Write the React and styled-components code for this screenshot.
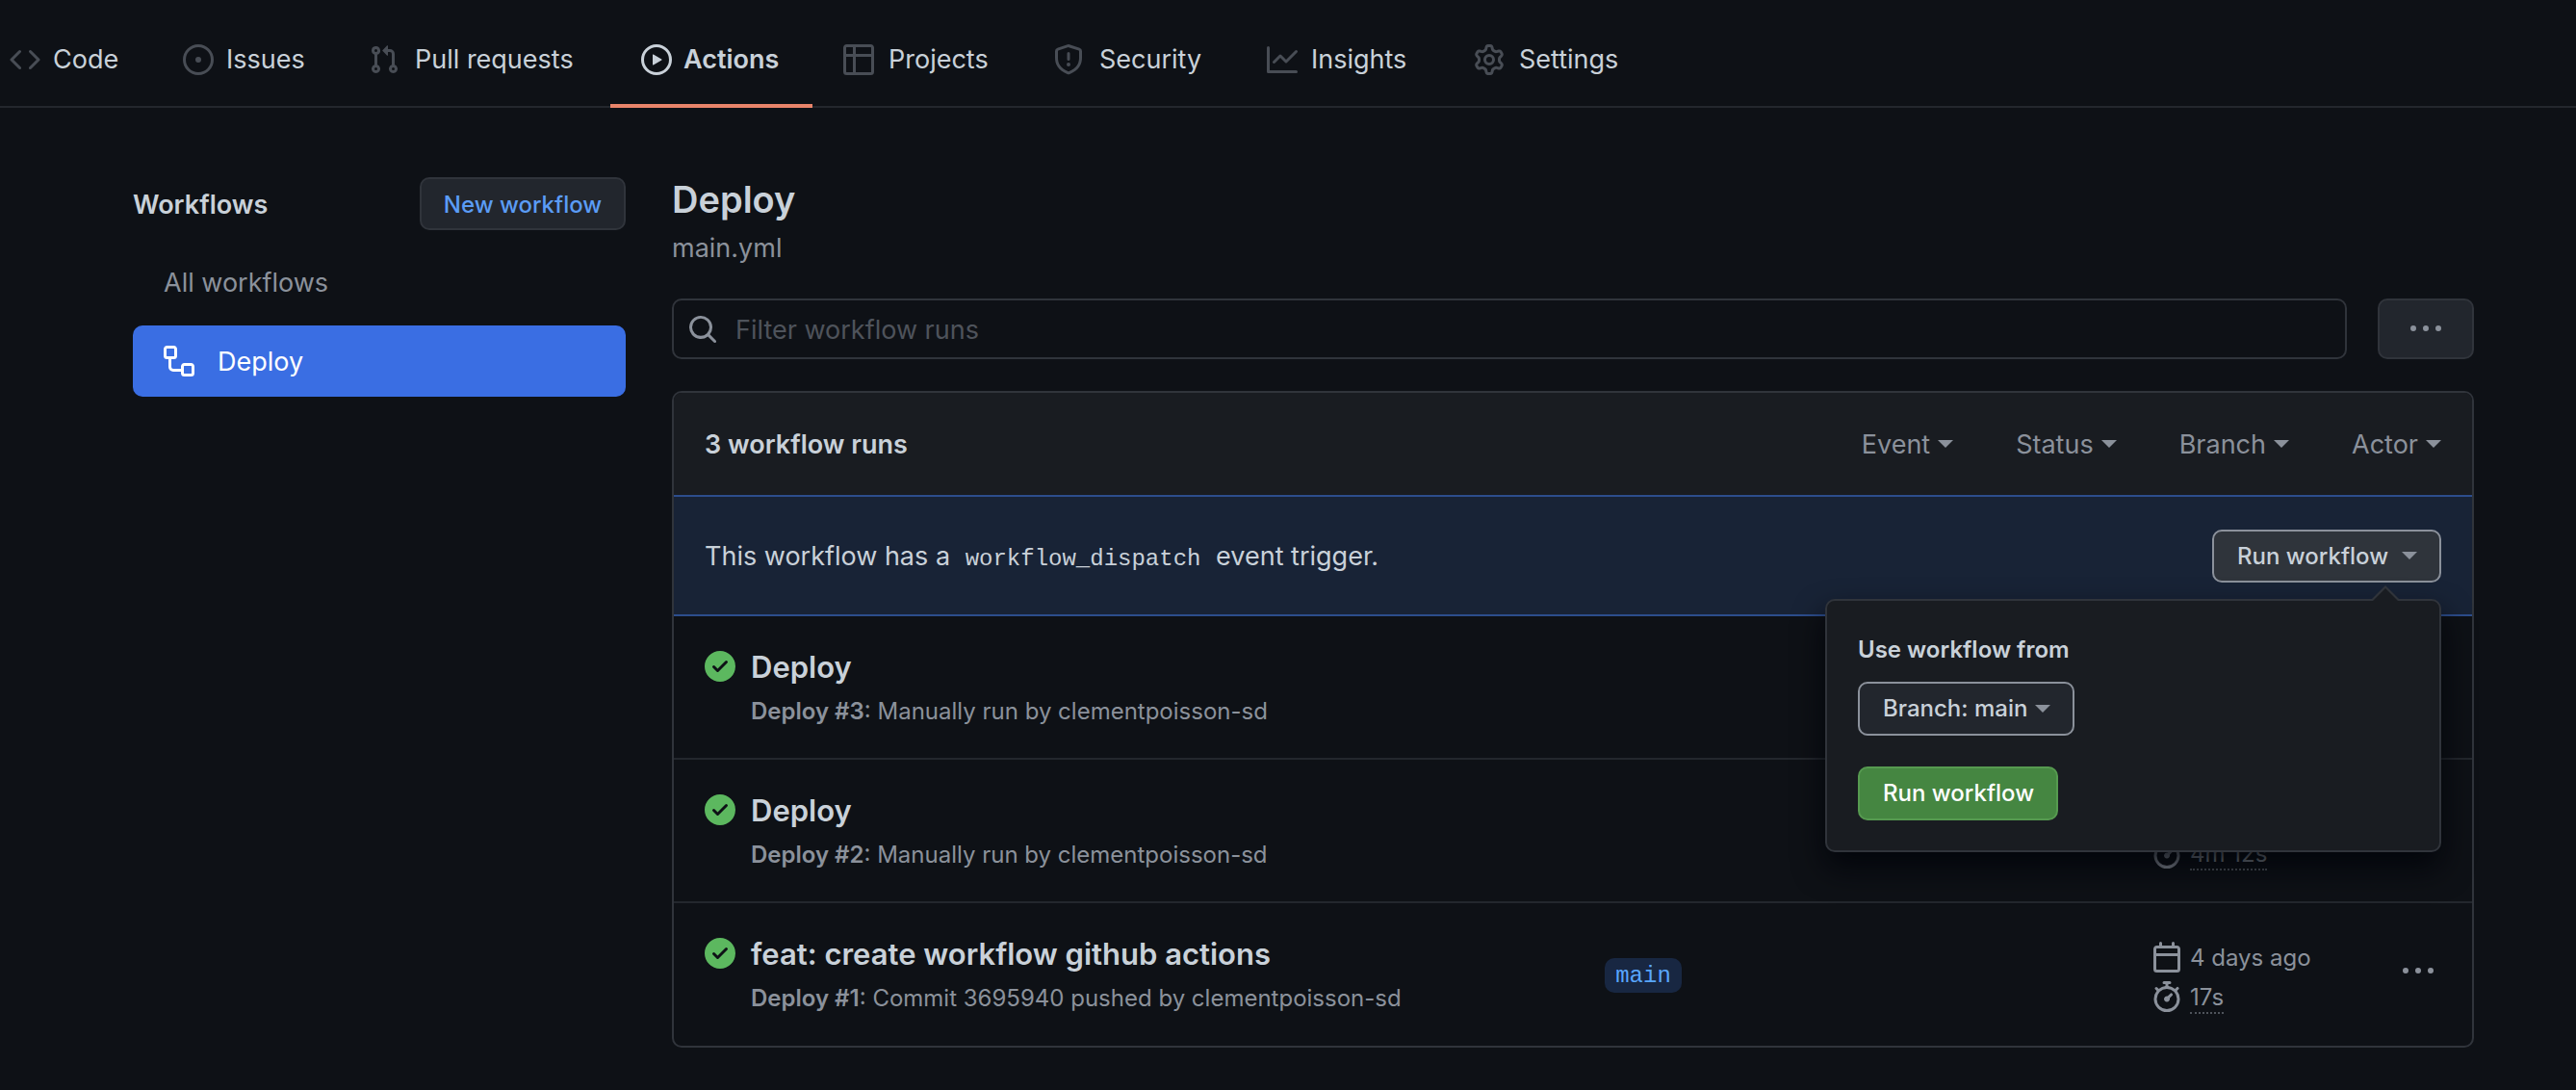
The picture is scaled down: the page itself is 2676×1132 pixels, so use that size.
import React from "react";
import styled, { createGlobalStyle } from "styled-components";

const Global = createGlobalStyle`
  html, body { margin: 0; padding: 0; background: #0e1116; }
  body { font-family: Inter, "Noto Sans", "Liberation Sans", sans-serif; color: #c9d1d9; overflow: hidden; -webkit-font-smoothing: antialiased; }
  * { box-sizing: border-box; }
`;

const P = {
  code: "m11.28 3.22 4.25 4.25a.75.75 0 0 1 0 1.06l-4.25 4.25a.749.749 0 0 1-1.275-.326.749.749 0 0 1 .215-.734L13.94 8l-3.72-3.72a.749.749 0 0 1 .326-1.275.749.749 0 0 1 .734.215Zm-6.56 0a.751.751 0 0 1 1.042.018.751.751 0 0 1 .018 1.042L2.06 8l3.72 3.72a.749.749 0 0 1-.326 1.275.749.749 0 0 1-.734-.215L.47 8.53a.75.75 0 0 1 0-1.06Z",
  issue: "M8 9.5a1.5 1.5 0 1 0 0-3 1.5 1.5 0 0 0 0 3ZM8 0a8 8 0 1 1 0 16A8 8 0 0 1 8 0ZM1.5 8a6.5 6.5 0 1 0 13 0 6.5 6.5 0 0 0-13 0Z",
  pr: "M1.5 3.25a2.25 2.25 0 1 1 3 2.122v5.256a2.251 2.251 0 1 1-1.5 0V5.372A2.25 2.25 0 0 1 1.5 3.25Zm5.677-.177L9.573.677A.25.25 0 0 1 10 .854V2.5h1A2.5 2.5 0 0 1 13.5 5v5.628a2.251 2.251 0 1 1-1.5 0V5a1 1 0 0 0-1-1h-1v1.646a.25.25 0 0 1-.427.177L7.177 3.427a.25.25 0 0 1 0-.354ZM3.75 2.5a.75.75 0 1 0 0 1.5.75.75 0 0 0 0-1.5Zm0 9.5a.75.75 0 1 0 0 1.5.75.75 0 0 0 0-1.5Zm8.25.75a.75.75 0 1 0 1.5 0 .75.75 0 0 0-1.5 0Z",
  play: "M8 0a8 8 0 1 1 0 16A8 8 0 0 1 8 0ZM1.5 8a6.5 6.5 0 1 0 13 0 6.5 6.5 0 0 0-13 0Zm4.879-2.773 4.264 2.559a.25.25 0 0 1 0 .428l-4.264 2.559A.25.25 0 0 1 6 10.559V5.442a.25.25 0 0 1 .379-.215Z",
  table: "M0 1.75C0 .784.784 0 1.75 0h12.5C15.216 0 16 .784 16 1.75v12.5A1.75 1.75 0 0 1 14.25 16H1.75A1.75 1.75 0 0 1 0 14.25ZM6.5 6.5v8h7.75a.25.25 0 0 0 .25-.25V6.5Zm8-1.5V1.75a.25.25 0 0 0-.25-.25H6.5V5Zm-13 1.5v7.75c0 .138.112.25.25.25H5v-8ZM5 5V1.5H1.75a.25.25 0 0 0-.25.25V5Z",
  shield: "M7.467.133a1.748 1.748 0 0 1 1.066 0l5.25 1.68A1.75 1.75 0 0 1 15 3.48V7c0 1.566-.32 3.182-1.303 4.682-.983 1.498-2.585 2.813-5.032 3.855a1.697 1.697 0 0 1-1.33 0c-2.447-1.042-4.049-2.357-5.032-3.855C1.32 10.182 1 8.566 1 7V3.48a1.75 1.75 0 0 1 1.217-1.667Zm.61 1.429a.25.25 0 0 0-.153 0l-5.25 1.68a.25.25 0 0 0-.174.238V7c0 1.358.275 2.666 1.057 3.86.784 1.194 2.121 2.34 4.366 3.297a.196.196 0 0 0 .154 0c2.245-.956 3.582-2.104 4.366-3.298C13.225 9.666 13.5 8.36 13.5 7V3.48a.251.251 0 0 0-.174-.237l-5.25-1.68ZM8.75 4.75v3a.75.75 0 0 1-1.5 0v-3a.75.75 0 0 1 1.5 0ZM9 10.5a1 1 0 1 1-2 0 1 1 0 0 1 2 0Z",
  graph: "M1.5 1.75V13.5h13.75a.75.75 0 0 1 0 1.5H.75a.75.75 0 0 1-.75-.75V1.75a.75.75 0 0 1 1.5 0Zm14.28 2.53-5.25 5.25a.75.75 0 0 1-1.06 0L7 7.06 4.28 9.78a.751.751 0 0 1-1.042-.018.751.751 0 0 1-.018-1.042l3.25-3.25a.75.75 0 0 1 1.06 0L10 7.94l4.72-4.72a.751.751 0 0 1 1.042.018.751.751 0 0 1 .018 1.042Z",
  gear: "M8 0a8.2 8.2 0 0 1 .701.031C9.444.095 9.99.645 10.16 1.29l.288 1.107c.018.066.079.158.212.224.231.114.454.243.668.386.123.082.233.09.299.071l1.103-.303c.644-.176 1.392.021 1.82.63.27.385.506.792.704 1.218.315.675.111 1.422-.364 1.891l-.814.806c-.049.048-.098.147-.088.294.016.257.016.515 0 .772-.01.147.038.246.088.294l.814.806c.475.469.679 1.216.364 1.891a7.977 7.977 0 0 1-.704 1.217c-.428.61-1.176.807-1.82.63l-1.102-.302c-.067-.019-.177-.011-.3.071a5.909 5.909 0 0 1-.668.386c-.133.066-.194.158-.211.224l-.29 1.106c-.168.646-.715 1.196-1.458 1.26a8.006 8.006 0 0 1-1.402 0c-.743-.064-1.289-.614-1.458-1.26l-.289-1.106c-.018-.066-.079-.158-.212-.224a5.738 5.738 0 0 1-.668-.386c-.123-.082-.233-.09-.299-.071l-1.103.303c-.644.176-1.392-.021-1.82-.63a8.12 8.12 0 0 1-.704-1.218c-.315-.675-.111-1.422.363-1.891l.815-.806c.05-.048.098-.147.088-.294a6.214 6.214 0 0 1 0-.772c.01-.147-.038-.246-.088-.294l-.815-.806C.635 6.045.431 5.298.746 4.623a7.92 7.92 0 0 1 .704-1.217c.428-.61 1.176-.807 1.82-.63l1.102.302c.067.019.177.011.3-.071.214-.143.437-.272.668-.386.133-.066.194-.158.211-.224l.29-1.106C6.009.645 6.556.095 7.299.03 7.53.01 7.764 0 8 0Zm-.571 1.525c-.036.003-.108.036-.137.146l-.289 1.105c-.147.561-.549.967-.998 1.189-.173.086-.34.183-.5.29-.417.278-.97.423-1.529.27l-1.103-.303c-.109-.03-.175.016-.195.045-.22.312-.412.644-.573.99-.014.031-.021.11.059.19l.815.806c.411.406.562.957.53 1.456a4.709 4.709 0 0 0 0 .582c.032.499-.119 1.05-.53 1.456l-.815.806c-.081.08-.073.159-.059.19.162.346.353.677.573.989.02.03.085.076.195.046l1.102-.303c.56-.153 1.113-.008 1.53.27.161.107.328.204.501.29.447.222.85.629.997 1.189l.289 1.105c.029.109.101.143.137.146a6.6 6.6 0 0 0 1.142 0c.036-.003.108-.036.137-.146l.289-1.105c.147-.561.549-.967.998-1.189.173-.086.34-.183.5-.29.417-.278.97-.423 1.529-.27l1.103.303c.109.029.175-.016.195-.045.22-.313.411-.644.573-.99.014-.031.021-.11-.059-.19l-.815-.806c-.411-.406-.562-.957-.53-1.456a4.709 4.709 0 0 0 0-.582c-.032-.499.119-1.05.53-1.456l.815-.806c.081-.08.073-.159.059-.19a6.464 6.464 0 0 0-.573-.989c-.02-.03-.085-.076-.195-.046l-1.102.303c-.56.153-1.113.008-1.53-.27a4.44 4.44 0 0 0-.501-.29c-.447-.222-.85-.629-.997-1.189l-.289-1.105c-.029-.11-.101-.143-.137-.146a6.6 6.6 0 0 0-1.142 0ZM11 8a3 3 0 1 1-6 0 3 3 0 0 1 6 0ZM9.5 8a1.5 1.5 0 1 0-3.001.001A1.5 1.5 0 0 0 9.5 8Z",
  search: "M10.68 11.74a6 6 0 0 1-7.922-8.982 6 6 0 0 1 8.982 7.922l3.04 3.04a.749.749 0 0 1-.326 1.275.749.749 0 0 1-.734-.215ZM11.5 7a4.499 4.499 0 1 0-8.997 0A4.499 4.499 0 0 0 11.5 7Z",
  workflow: "M0 1.75C0 .784.784 0 1.75 0h3.5C6.216 0 7 .784 7 1.75v3.5A1.75 1.75 0 0 1 5.25 7H4v4a1 1 0 0 0 1 1h4v-1.25C9 9.784 9.784 9 10.75 9h3.5c.966 0 1.75.784 1.75 1.75v3.5A1.75 1.75 0 0 1 14.25 16h-3.5A1.75 1.75 0 0 1 9 14.25v-.75H5A2.5 2.5 0 0 1 2.5 11V7h-.75A1.75 1.75 0 0 1 0 5.25Zm1.75-.25a.25.25 0 0 0-.25.25v3.5c0 .138.112.25.25.25h3.5a.25.25 0 0 0 .25-.25v-3.5a.25.25 0 0 0-.25-.25Zm9 9a.25.25 0 0 0-.25.25v3.5c0 .138.112.25.25.25h3.5a.25.25 0 0 0 .25-.25v-3.5a.25.25 0 0 0-.25-.25Z",
  check: "M8 16A8 8 0 1 1 8 0a8 8 0 0 1 0 16Zm3.78-9.72a.751.751 0 0 0-.018-1.042.751.751 0 0 0-1.042-.018L6.75 9.19 5.28 7.72a.751.751 0 0 0-1.042.018.751.751 0 0 0-.018 1.042l2 2a.75.75 0 0 0 1.06 0Z",
  calendar: "M4.75 0a.75.75 0 0 1 .75.75V2h5V.75a.75.75 0 0 1 1.5 0V2h1.25c.966 0 1.75.784 1.75 1.75v10.5A1.75 1.75 0 0 1 13.25 16H2.75A1.75 1.75 0 0 1 1 14.25V3.75C1 2.784 1.784 2 2.75 2H4V.75A.75.75 0 0 1 4.75 0ZM2.5 7.5v6.75c0 .138.112.25.25.25h10.5a.25.25 0 0 0 .25-.25V7.5Zm10.75-4H2.75a.25.25 0 0 0-.25.25V6h11V3.75a.25.25 0 0 0-.25-.25Z",
  stopwatch: "M5.75.75A.75.75 0 0 1 6.5 0h3a.75.75 0 0 1 0 1.5h-.75v1l-.001.041a6.724 6.724 0 0 1 3.464 1.435l.007-.006.75-.75a.75.75 0 1 1 1.06 1.06l-.75.75-.006.007a6.75 6.75 0 1 1-10.548 0L2.72 5.03l-.75-.75a.751.751 0 0 1 .018-1.042.751.751 0 0 1 1.042-.018l.75.75.007.006A6.72 6.72 0 0 1 7.25 2.541V1.5H6.5a.75.75 0 0 1-.75-.75ZM8 14.5a5.25 5.25 0 1 0-.001-10.501A5.25 5.25 0 0 0 8 14.5Zm.389-6.7 1.33-1.33a.75.75 0 1 1 1.06 1.06L9.45 8.861A1.503 1.503 0 0 1 8 10.75a1.499 1.499 0 1 1 .389-2.95Z",
  kebab: "M8 9a1.5 1.5 0 1 0 0-3 1.5 1.5 0 0 0 0 3ZM1.5 9a1.5 1.5 0 1 0 0-3 1.5 1.5 0 0 0 0 3Zm13 0a1.5 1.5 0 1 0 0-3 1.5 1.5 0 0 0 0 3Z",
};

const Svg = styled.svg`
  flex: none;
  display: block;
  fill: ${(p) => p.$color || "currentColor"};
`;
const Icon = ({ name, size = 32, color }) => (
  <Svg viewBox="0 0 16 16" width={size} height={size} $color={color} fillRule="evenodd" aria-hidden="true">
    <path d={P[name]} />
  </Svg>
);

const Page = styled.div`
  width: 2676px;
  height: 1132px;
  overflow: hidden;
  background: #0e1116;
`;
const TabBar = styled.nav`
  display: flex;
  height: 112px;
  padding-left: 10px;
  align-items: stretch;
  border-bottom: 2px solid #23272d;
`;
const Tab = styled.a`
  display: flex;
  align-items: center;
  gap: ${(p) => p.$gap}px;
  width: ${(p) => p.$w}px;
  margin-bottom: -2px;
  padding-left: ${(p) => p.$pl}px;
  padding-top: 16px;
  font-size: 27px;
  line-height: 36px;
  white-space: nowrap;
  color: #c9d1d9;
  font-weight: ${(p) => (p.$active ? 600 : 400)};
  border-bottom: 4px solid ${(p) => (p.$active ? "#e8846a" : "transparent")};
`;
const Main = styled.main`
  display: flex;
  gap: 48px;
  padding: 72px 0 0 138px;
`;
const Sidebar = styled.aside`
  width: 512px;
  flex: none;
`;
const SideHead = styled.div`
  display: flex;
  justify-content: space-between;
  align-items: center;
  height: 55px;
`;
const SideTitle = styled.h2`
  margin: 2px 0 0;
  font-size: 27px;
  font-weight: 600;
  color: #c9d1d9;
`;
const Button = styled.button`
  display: inline-flex;
  align-items: center;
  flex: none;
  font-family: inherit;
  font-size: 24px;
  font-weight: 500;
  height: ${(p) => p.$h || 55}px;
  width: ${(p) => p.$w}px;
  padding: ${(p) => p.$pt || 0}px ${(p) => p.$px ?? 24}px 0;
  border-radius: 10px;
  border: 2px solid ${(p) => p.$border || "#30343b"};
  background: ${(p) => p.$bg || "#22262d"};
  color: ${(p) => p.$color || "#c9d1d9"};
  justify-content: ${(p) => p.$justify || "flex-start"};
  white-space: nowrap;
`;
const NavList = styled.div`
  margin-top: 17px;
  display: flex;
  flex-direction: column;
  gap: 8px;
`;
const NavItem = styled.a`
  display: flex;
  align-items: center;
  gap: 24px;
  height: 74px;
  padding-left: 32px;
  border-radius: 10px;
  font-size: 27px;
  color: ${(p) => (p.$active ? "#ffffff" : "#8b919b")};
  background: ${(p) => (p.$active ? "#3a6ee3" : "transparent")};
`;
const Content = styled.section`
  width: 1872px;
  flex: none;
`;
const Title = styled.h1`
  margin: 0;
  font-size: 38px;
  line-height: 46px;
  font-weight: 600;
  color: #c9d1d9;
`;
const Sub = styled.div`
  margin-top: 10px;
  font-size: 27px;
  line-height: 36px;
  color: #8b919b;
`;
const FilterRow = styled.div`
  display: flex;
  gap: 32px;
  margin-top: 34px;
  height: 63px;
`;
const FilterBox = styled.div`
  flex: 1;
  display: flex;
  align-items: center;
  gap: 18px;
  padding-left: 14px;
  border: 2px solid #30343b;
  border-radius: 10px;
  background: #0e1116;
  color: #8b919b;
`;
const Placeholder = styled.span`
  margin-top: 2px;
  font-size: 27px;
  color: #4e535b;
`;
const Card = styled.div`
  margin-top: 33px;
  border: 2px solid #30343b;
  border-radius: 10px;
  height: 682px;
`;
const CardHead = styled.div`
  height: 106px;
  display: flex;
  align-items: center;
  justify-content: space-between;
  padding: 0 32px;
  background: #191c21;
  border-radius: 8px 8px 0 0;
`;
const CardTitle = styled.h3`
  margin: 0;
  font-size: 27px;
  font-weight: 600;
  color: #c9d1d9;
`;
const Filters = styled.div`
  display: flex;
  gap: 65px;
`;
const FilterLabel = styled.span`
  display: flex;
  align-items: center;
  gap: 8px;
  font-size: 27px;
  color: #8b919b;
`;
const Caret = styled.i`
  display: block;
  flex: none;
  width: 0;
  height: 0;
  border-style: solid;
  border-width: 8px 8px 0;
  border-color: #8b919b transparent transparent;
  margin-left: ${(p) => p.$ml || 0}px;
`;
const Banner = styled.div`
  height: 126px;
  display: flex;
  align-items: center;
  justify-content: space-between;
  padding: 0 32px;
  background: #182336;
  border-top: 2px solid #2c4d8c;
  border-bottom: 2px solid #2c4d8c;
  font-size: 27px;
  color: #c9d1d9;
`;
const Mono = styled.code`
  font-family: "Liberation Mono", "DejaVu Sans Mono", monospace;
  font-size: 24px;
  margin: 0 8px;
`;
const Anchor = styled.div`
  position: relative;
`;
const Popover = styled.div`
  position: absolute;
  z-index: 5;
  top: calc(100% + 17px);
  right: 0;
  width: 640px;
  height: 263px;
  padding: 32px;
  background: #191c21;
  border: 2px solid #30343b;
  border-radius: 10px;
  box-shadow: 0 16px 32px rgba(1, 4, 9, 0.85);
  &::before, &::after {
    content: "";
    position: absolute;
    right: 42px;
    width: 0;
    height: 0;
    border-style: solid;
    border-width: 0 14px 14px;
  }
  &::before {
    top: -16px;
    border-color: transparent transparent #30343b;
  }
  &::after {
    top: -13px;
    border-color: transparent transparent #191c21;
  }
`;
const PopLabel = styled.div`
  font-size: 24px;
  line-height: 38px;
  font-weight: 600;
  color: #c9d1d9;
`;
const PopGroup = styled.div`
  display: flex;
  flex-direction: column;
  align-items: flex-start;
  gap: 32px;
  margin-top: 14px;
`;
const Row = styled.div`
  display: grid;
  grid-template-columns: 48px 887px 568px 261px 1fr;
  height: ${(p) => (p.$last ? 148 : 149)}px;
  padding-left: 32px;
  border-bottom: ${(p) => (p.$last ? "none" : "2px solid #23272d")};
`;
const CheckCell = styled.div`
  padding-top: 36px;
`;
const Info = styled.div`
  padding-top: 34px;
`;
const RunTitle = styled.div`
  font-size: 31px;
  line-height: 38px;
  font-weight: 600;
  color: #c9d1d9;
`;
const RunSub = styled.div`
  margin-top: 10px;
  font-size: 24px;
  line-height: 34px;
  color: #8b919b;
  b { font-weight: 600; }
`;
const BadgeCell = styled.div`
  padding-top: 57px;
`;
const Badge = styled.span`
  display: inline-flex;
  align-items: center;
  justify-content: center;
  width: 80px;
  height: 36px;
  border-radius: 10px;
  background: #182742;
  color: #58a6ff;
  font-family: "Liberation Mono", "DejaVu Sans Mono", monospace;
  font-size: 24px;
`;
const Meta = styled.div`
  display: flex;
  flex-direction: column;
  gap: 9px;
  padding-top: 40px;
  color: #8b919b;
`;
const MetaLine = styled.div`
  display: flex;
  align-items: center;
  gap: 8px;
  height: 32px;
  font-size: 24px;
`;
const Duration = styled.span`
  align-self: flex-start;
  margin-top: 2px;
  border-bottom: 2px dotted #4e535b;
  line-height: 30px;
`;
const Dots = styled.div`
  padding-top: 55px;
  color: #8b919b;
`;

const tabs = [
  ["code", "Code", 148, 0, 13],
  ["issue", "Issues", 193, 32, 13],
  ["pr", "Pull requests", 283, 32, 16],
  ["play", "Actions", 210, 32, 12, true],
  ["table", "Projects", 218, 32, 15],
  ["shield", "Security", 222, 32, 16],
  ["graph", "Insights", 215, 32, 14],
  ["gear", "Settings", 180, 32, 15],
];

export default function App() {
  return (
    <Page>
      <Global />
      <TabBar>
        {tabs.map(([ic, label, w, pl, gap, active]) => (
          <Tab key={label} $w={w} $pl={pl} $gap={gap} $active={active}>
            <Icon name={ic} color={active ? "#c9d1d9" : "#484d55"} />
            {label}
          </Tab>
        ))}
      </TabBar>
      <Main>
        <Sidebar>
          <SideHead>
            <SideTitle>Workflows</SideTitle>
            <Button $w={214} $color="#5b9cf5" $justify="center" $px={0} $pt={2}>New workflow</Button>
          </SideHead>
          <NavList>
            <NavItem>All workflows</NavItem>
            <NavItem $active>
              <Icon name="workflow" />
              Deploy
            </NavItem>
          </NavList>
        </Sidebar>
        <Content>
          <Title>Deploy</Title>
          <Sub>main.yml</Sub>
          <FilterRow>
            <FilterBox>
              <Icon name="search" />
              <Placeholder>Filter workflow runs</Placeholder>
            </FilterBox>
            <Button $w={100} $h={63} $justify="center" $px={0} $color="#8b919b">
              <Icon name="kebab" />
            </Button>
          </FilterRow>
          <Card>
            <CardHead>
              <CardTitle>3 workflow runs</CardTitle>
              <Filters>
                {["Event", "Status", "Branch", "Actor"].map((f) => (
                  <FilterLabel key={f}>
                    {f}
                    <Caret />
                  </FilterLabel>
                ))}
              </Filters>
            </CardHead>
            <Banner>
              <span>
                This workflow has a <Mono>workflow_dispatch</Mono> event trigger.
              </span>
              <Anchor>
                <Button $w={238} $bg="#2f343b" $border="#8b919b" $px={24}>
                  Run workflow
                  <Caret $ml={14} />
                </Button>
                <Popover>
                  <PopLabel>Use workflow from</PopLabel>
                  <PopGroup>
                    <Button $w={225} $h={56} $border="#8b919b" $px={24}>
                      Branch: main
                      <Caret $ml={8} />
                    </Button>
                    <Button $w={208} $h={56} $bg="#458641" $border="#569a50" $color="#ffffff" $px={24}>
                      Run workflow
                    </Button>
                  </PopGroup>
                </Popover>
              </Anchor>
            </Banner>
            <Row>
              <CheckCell><Icon name="check" color="#5cb85f" /></CheckCell>
              <Info>
                <RunTitle>Deploy</RunTitle>
                <RunSub><b>Deploy #3</b>: Manually run by clementpoisson-sd</RunSub>
              </Info>
            </Row>
            <Row>
              <CheckCell><Icon name="check" color="#5cb85f" /></CheckCell>
              <Info>
                <RunTitle>Deploy</RunTitle>
                <RunSub><b>Deploy #2</b>: Manually run by clementpoisson-sd</RunSub>
              </Info>
              <div />
              <Meta>
                <MetaLine><Icon name="calendar" /></MetaLine>
                <MetaLine><Icon name="stopwatch" /><Duration>4m 12s</Duration></MetaLine>
              </Meta>
            </Row>
            <Row $last>
              <CheckCell><Icon name="check" color="#5cb85f" /></CheckCell>
              <Info>
                <RunTitle>feat: create workflow github actions</RunTitle>
                <RunSub><b>Deploy #1</b>: Commit 3695940 pushed by clementpoisson-sd</RunSub>
              </Info>
              <BadgeCell><Badge>main</Badge></BadgeCell>
              <Meta>
                <MetaLine><Icon name="calendar" />4 days ago</MetaLine>
                <MetaLine><Icon name="stopwatch" /><Duration>17s</Duration></MetaLine>
              </Meta>
              <Dots><Icon name="kebab" /></Dots>
            </Row>
          </Card>
        </Content>
      </Main>
    </Page>
  );
}
